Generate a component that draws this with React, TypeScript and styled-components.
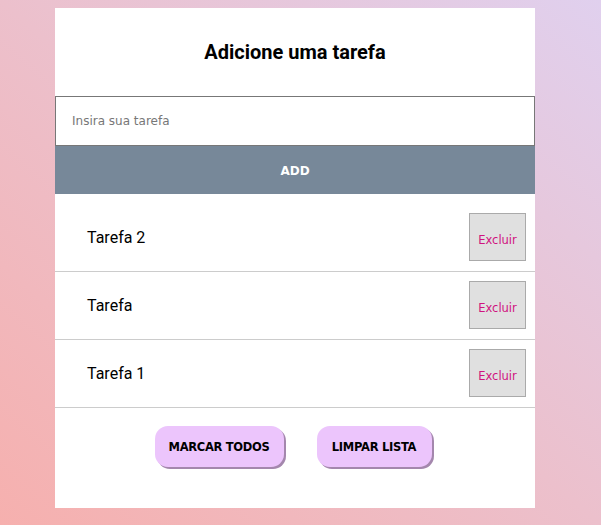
import React from "react";
import styled, { createGlobalStyle } from "styled-components";

const Global = createGlobalStyle`
  html, body { margin: 0; padding: 0; min-height: 100%; }
  body {
    min-height: 525px;
    background: linear-gradient(to top right, #f6b0ae 0%, #ecc0cc 50%, #e0d0ee 100%);
    font-family: Roboto, sans-serif;
    padding: 8px 0 17px;
    box-sizing: border-box;
  }
`;

const Card = styled.div`
  width: 480px;
  height: 500px;
  margin: 0 0 0 55px;
  background: #fff;
  display: flex;
  flex-direction: column;
`;

const Title = styled.h1`
  margin: 0;
  height: 88px;
  display: flex;
  align-items: center;
  justify-content: center;
  font-family: Roboto, sans-serif;
  font-weight: 700;
  font-size: 20px;
  color: #000;
`;

const Input = styled.input`
  box-sizing: border-box;
  width: 100%;
  height: 50px;
  border: 1px solid #777;
  padding: 0 16px;
  font-family: "DejaVu Sans", Verdana, sans-serif;
  font-size: 12px;
  outline: none;
  &::placeholder { color: #777; }
`;

const AddButton = styled.button`
  height: 48px;
  border: none;
  background: #778899;
  color: #fff;
  font-family: "DejaVu Sans", Verdana, sans-serif;
  font-weight: 700;
  font-size: 12px;
  padding: 2px 0 0;
`;

const List = styled.ul`
  list-style: none;
  margin: 0;
  padding: 10px 0 0;
`;

const Row = styled.li`
  display: flex;
  align-items: center;
  justify-content: space-between;
  padding: 9px 9px 10px 32px;
  border-bottom: 1px solid #ccc;
`;

const TaskText = styled.span`
  font-family: Roboto, sans-serif;
  font-size: 16px;
  color: #000;
`;

const DeleteButton = styled.button`
  width: 57px;
  height: 48px;
  box-sizing: border-box;
  background: #e0e0e0;
  border: 1px solid #aaa;
  color: #d0147f;
  font-family: "DejaVu Sans", Verdana, sans-serif;
  font-size: 11.5px;
  padding: 5px 0 0;
`;

const Footer = styled.div`
  display: flex;
  justify-content: center;
  gap: 33px;
  padding: 18px 4px 0 0;
`;

const PillButton = styled.button<{ $w: number }>`
  width: ${(p) => p.$w}px;
  height: 41px;
  padding: 0;
  border: none;
  border-radius: 13px;
  background: #ecc5fc;
  box-shadow: 2px 2px 0 #a487ad;
  color: #000;
  font-family: "DejaVu Sans", Verdana, sans-serif;
  font-weight: 700;
  font-size: 11.5px;
  letter-spacing: -0.3px;
`;

const tasks = ["Tarefa 2", "Tarefa", "Tarefa 1"];

export default function App() {
  return (
    <>
      <Global />
      <Card>
        <Title>Adicione uma tarefa</Title>
        <Input placeholder="Insira sua tarefa" />
        <AddButton>ADD</AddButton>
        <List>
          {tasks.map((t) => (
            <Row key={t}>
              <TaskText>{t}</TaskText>
              <DeleteButton>Excluir</DeleteButton>
            </Row>
          ))}
        </List>
        <Footer>
          <PillButton $w={129}>MARCAR TODOS</PillButton>
          <PillButton $w={115}>LIMPAR LISTA</PillButton>
        </Footer>
      </Card>
    </>
  );
}
